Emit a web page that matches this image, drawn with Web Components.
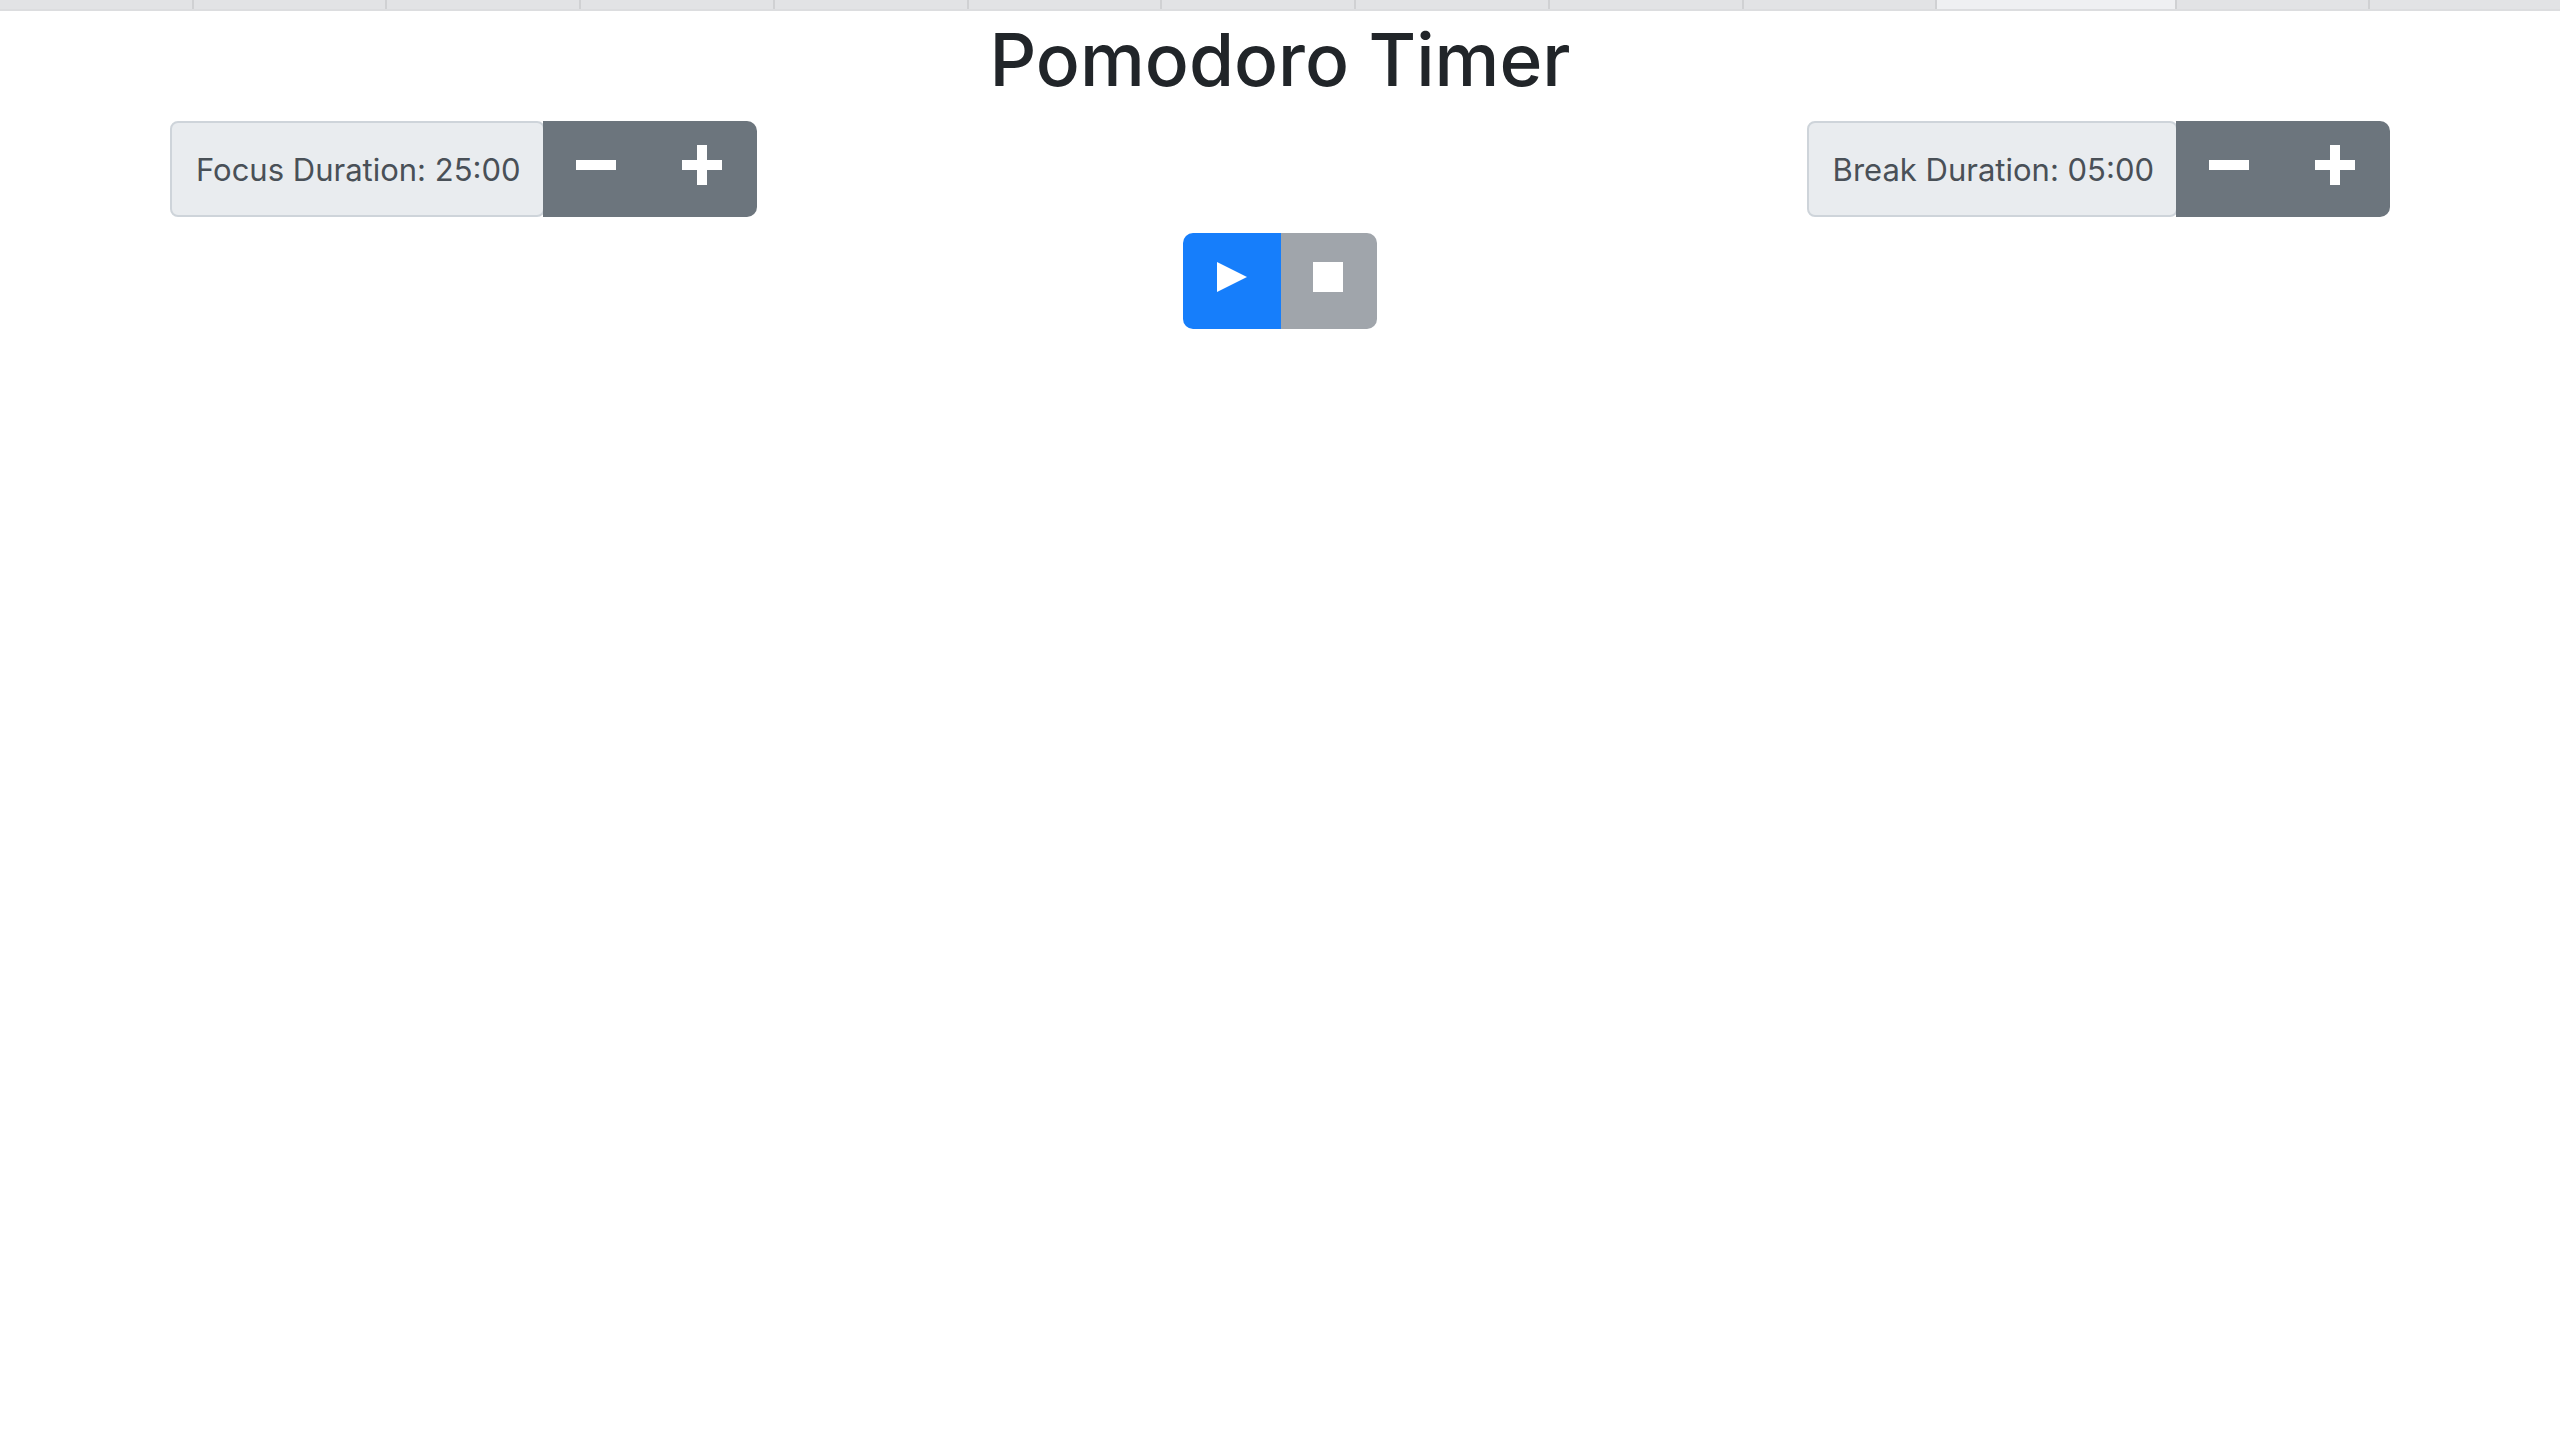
<!DOCTYPE html>
<html lang="en">
<head>
<meta charset="utf-8">
<title>Pomodoro Timer</title>
<style>
body { margin: 0; background: #fff; color: #212529; font: 400 31px/48px Inter, "Liberation Sans", sans-serif; }
</style>
</head>
<body>
<pomodoro-app></pomodoro-app>
<script>
const define = (name, html) => customElements.define(name, class extends HTMLElement {
  constructor() {
    super();
    this.attachShadow({ mode: "open" }).innerHTML = html;
  }
});

define("tab-strip", `<style>
:host { display: flex; height: 9px; overflow: hidden; background: #e2e3e5; border-bottom: 2px solid #dcdddf; }
i { flex: 194 1 0; box-sizing: border-box; border-right: 2px solid #d0d1d3; }
i.active { flex-grow: 240; background: #eff0f2; }
i:last-child { flex-grow: 192; border-right: 0; }
</style>${"<i></i>".repeat(10)}<i class="active"></i><i></i><i></i>`);

customElements.define("duration-control", class extends HTMLElement {
  constructor() {
    super();
    const label = this.getAttribute("label");
    this.attachShadow({ mode: "open" }).innerHTML = `<style>
:host { display: flex; height: 96px; }
.text { display: flex; align-items: center; box-sizing: border-box; padding: 2px 22px 0 24px; white-space: nowrap;
  color: #495057; background: #e9ecef; border: 2px solid #ced4da; border-radius: 8px; }
.buttons { display: flex; margin-left: -2px; background: #6c757d; border-radius: 0 10px 10px 0; z-index: 1; }
button { width: 106px; padding: 0 0 8px; border: 0; background: none; color: #fff; cursor: pointer;
  display: flex; align-items: center; justify-content: center; }
button:last-child { width: 108px; padding-right: 2px; }
</style>
<div class="text"><slot></slot></div>
<div class="buttons">
  <button type="button" aria-label="Decrease ${label}"><svg width="40" height="40" fill="currentColor"><path d="M0 15h40v10H0z"/></svg></button>
  <button type="button" aria-label="Increase ${label}"><svg width="40" height="40" fill="currentColor"><path d="M15 0h10v15h15v10H25v15H15V25H0V15h15z"/></svg></button>
</div>`;
  }
});

define("play-controls", `<style>
:host { display: flex; width: 194px; height: 96px; border-radius: 10px; overflow: hidden; }
button { box-sizing: border-box; width: 98px; padding: 0 0 8px; border: 0; color: #fff; background: #167efb;
  display: flex; align-items: center; justify-content: center; }
button:first-child { border-right: 2px solid #4a7dba; }
button:disabled { width: 96px; padding-right: 2px; background: #a0a5ab; }
</style>
<button type="button" aria-label="Start"><svg width="30" height="30" fill="currentColor"><path d="M0 0L30 15L0 30z"/></svg></button>
<button type="button" aria-label="Stop" disabled><svg width="30" height="30" fill="currentColor"><path d="M0 0h30v30H0z"/></svg></button>`);

define("pomodoro-app", `<style>
:host { display: block; }
main { box-sizing: border-box; max-width: 2280px; margin: 0 auto; padding: 0 30px; }
h1 { margin: 0 0 16px; padding-top: 4px; text-align: center; font-size: 73px; line-height: 90px; font-weight: 500; }
.row { display: flex; justify-content: space-between; margin-bottom: 16px; }
.center { display: flex; justify-content: center; }
</style>
<tab-strip></tab-strip>
<main>
  <h1>Pomodoro Timer</h1>
  <div class="row">
    <duration-control label="focus duration">Focus Duration: 25:00</duration-control>
    <duration-control label="break duration">Break Duration: 05:00</duration-control>
  </div>
  <div class="center"><play-controls></play-controls></div>
</main>`);
</script>
</body>
</html>
